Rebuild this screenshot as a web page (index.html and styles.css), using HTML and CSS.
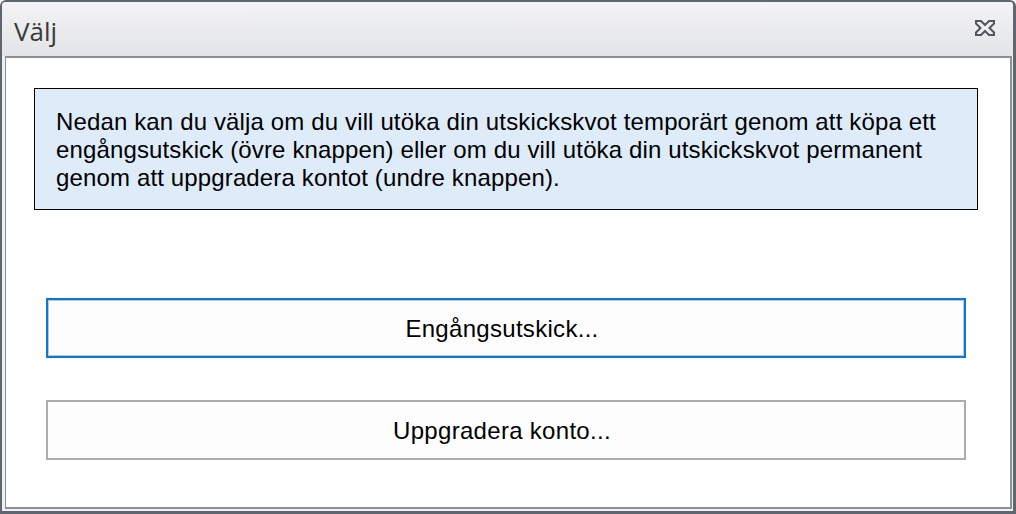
FILE: index.html
```html
<!DOCTYPE html>
<html lang="sv">
<head>
<meta charset="utf-8">
<title>Välj</title>
<link rel="stylesheet" href="styles.css">
</head>
<body>
<div class="window">
  <div class="titlebar">
    <span class="title">Välj</span>
    <span class="close" aria-label="Stäng">
      <svg width="20" height="16" viewBox="0 0 20 16">
        <polygon points="1,1 6,1 10,5 14,1 19,1 19,3.5 14.5,8 19,12.5 19,15 14,15 10,11 6,15 1,15 1,12.5 5.5,8 1,3.5" fill="#eeeef2" stroke="#50555f" stroke-width="2" stroke-linejoin="miter"/>
      </svg>
    </span>
  </div>
  <div class="frame">
    <div class="content">
      <div class="info">Nedan kan du välja om du vill utöka din utskickskvot temporärt genom att köpa ett engångsutskick (övre knappen) eller om du vill utöka din utskickskvot permanent genom att uppgradera kontot (undre knappen).</div>
      <button class="btn btn-focus">Engångsutskick...</button>
      <button class="btn btn-second">Uppgradera konto...</button>
    </div>
  </div>
</div>
</body>
</html>
```
FILE: styles.css
```css
html, body {
  margin: 0;
  padding: 0;
  background: #ffffff;
}

.window {
  width: 1016px;
  height: 514px;
  box-sizing: border-box;
  border-style: solid;
  border-color: #5f6670;
  border-width: 2px 3px 3px 2px;
  border-radius: 6px 6px 0 0;
  display: flex;
  flex-direction: column;
  background: #eef0f2;
  overflow: hidden;
}

.titlebar {
  height: 54px;
  flex: none;
  display: flex;
  align-items: center;
  justify-content: space-between;
  padding: 0 18px 0 12px;
  background: linear-gradient(#f3f3f5, #e3e4e7);
}

.title {
  font-family: "Open Sans", "Noto Sans", sans-serif;
  font-size: 26px;
  color: #3a3a3a;
  line-height: 1;
  margin-top: 4px;
}

.close {
  display: flex;
  width: 20px;
  height: 16px;
  margin-top: -2px;
}

.frame {
  flex: 1;
  display: flex;
  padding: 0 1px 2px 3px;
}

.content {
  flex: 1;
  background: #ffffff;
  border-style: solid;
  border-color: #8b9097;
  border-width: 2px 2px 2px 1px;
  display: flex;
  flex-direction: column;
  font-family: "Liberation Sans", Arial, sans-serif;
  font-size: 24px;
  color: #000000;
}

.info {
  margin: 30px 32px 0 28px;
  height: 122px;
  box-sizing: border-box;
  border: 1px solid #000000;
  background: #deebf8;
  padding: 19px 20px 0 21px;
  letter-spacing: 0.14px;
}

.btn {
  font: inherit;
  letter-spacing: 0.3px;
  color: #000000;
  background: #fdfdfd;
  height: 60px;
  width: 920px;
  box-sizing: border-box;
  margin-left: 40px;
  padding: 2px 8px 0 0;
  border: 2px solid #adadad;
  cursor: pointer;
}

.btn-focus {
  margin-top: 88px;
  border-color: #0a78d7;
  box-shadow: inset 0 0 0 1px #c4c4c4;
}

.btn-second {
  margin-top: 42px;
}
```
